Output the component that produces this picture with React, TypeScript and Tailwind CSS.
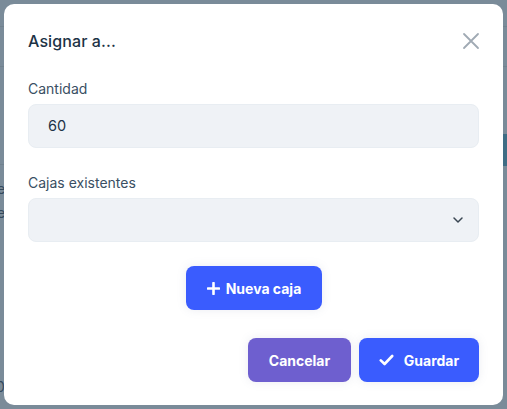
import React from "react";

export default function App() {
  return (
    <div
      className="relative w-[507px] h-[409px] overflow-hidden bg-[#7a8b99]"
      style={{ fontFamily: "Inter, 'Noto Sans', sans-serif" }}
    >
      {/* faint page beneath overlay */}
      <div className="flex flex-col">
        <div className="h-[27px] border-b border-[#71828f]" />
        <div className="h-[40px] border-b border-[#71828f]" />
        <div className="h-[98px] border-b border-[#71828f]" />
        <div className="pt-[12px] pl-0 text-[14px] leading-[24px] text-[#34495c] -ml-[3px]">
          <div>e</div>
          <div>e</div>
        </div>
      </div>
      <div className="absolute right-0 top-[134px] w-[4px] h-[32px] bg-[#3f6d85]" />
      <div className="absolute left-[-4px] top-[376px] text-[14px] text-[#34495c]">0</div>

      {/* modal */}
      <div className="absolute left-[4px] top-[4px] w-[499px] h-[401px] bg-white rounded-[10px] px-[24px] pt-[25px]">
        <div className="flex items-center justify-between h-[24px]">
          <h2 className="text-[16px] font-medium text-[#1d3346] tracking-[0.1px]">Asignar a...</h2>
          <svg width="18" height="18" viewBox="0 0 18 18" className="mr-[-1px]">
            <path d="M2 2 L16 16 M16 2 L2 16" stroke="#a0aab4" strokeWidth="1.8" strokeLinecap="round" />
          </svg>
        </div>

        <div className="mt-[26px]">
          <label className="block text-[14px] text-[#3a4f63] leading-[20px]">Cantidad</label>
          <div className="mt-[5px] h-[44px] rounded-[8px] bg-[#eff2f6] border border-[#e8edf2] flex items-center px-[19px] text-[14.5px] text-[#1d3346]">
            60
          </div>
        </div>

        <div className="mt-[25px]">
          <label className="block text-[14px] text-[#3a4f63] leading-[20px]">Cajas existentes</label>
          <div className="mt-[5px] h-[44px] rounded-[8px] bg-[#eff2f6] border border-[#e8edf2] flex items-center justify-end pr-[14px]">
            <svg width="12" height="12" viewBox="0 0 12 12">
              <path d="M2 4 L6 8 L10 4" stroke="#3a4652" strokeWidth="1.5" fill="none" strokeLinecap="round" strokeLinejoin="round" />
            </svg>
          </div>
        </div>

        <div className="mt-[24px] flex justify-center">
          <button className="ml-[1px] h-[44px] w-[136px] rounded-[8px] bg-[#3a5cfe] text-white text-[14px] font-bold flex items-center justify-center gap-[6px] shadow-[0_0_10px_rgba(120,130,160,0.15)]">
            <svg width="13" height="13" viewBox="0 0 13 13">
              <path d="M6.5 1 V12 M1 6.5 H12" stroke="white" strokeWidth="2.6" strokeLinecap="round" />
            </svg>
            Nueva caja
          </button>
        </div>

        <div className="mt-[28px] flex justify-end gap-[8px]">
          <button className="h-[44px] w-[103px] rounded-[8px] bg-[#6e5fcf] text-white text-[14px] font-bold shadow-[0_0_10px_rgba(120,130,160,0.15)]">
            Cancelar
          </button>
          <button className="h-[44px] w-[120px] rounded-[8px] bg-[#3a5cfe] text-white text-[14px] font-bold flex items-center justify-center gap-[10px] shadow-[0_0_10px_rgba(120,130,160,0.15)]">
            <svg width="15" height="12" viewBox="0 0 15 12">
              <path d="M1.8 6.4 L5.6 10 L13.2 2" stroke="white" strokeWidth="2.6" fill="none" strokeLinecap="round" strokeLinejoin="round" />
            </svg>
            Guardar
          </button>
        </div>
      </div>
    </div>
  );
}
